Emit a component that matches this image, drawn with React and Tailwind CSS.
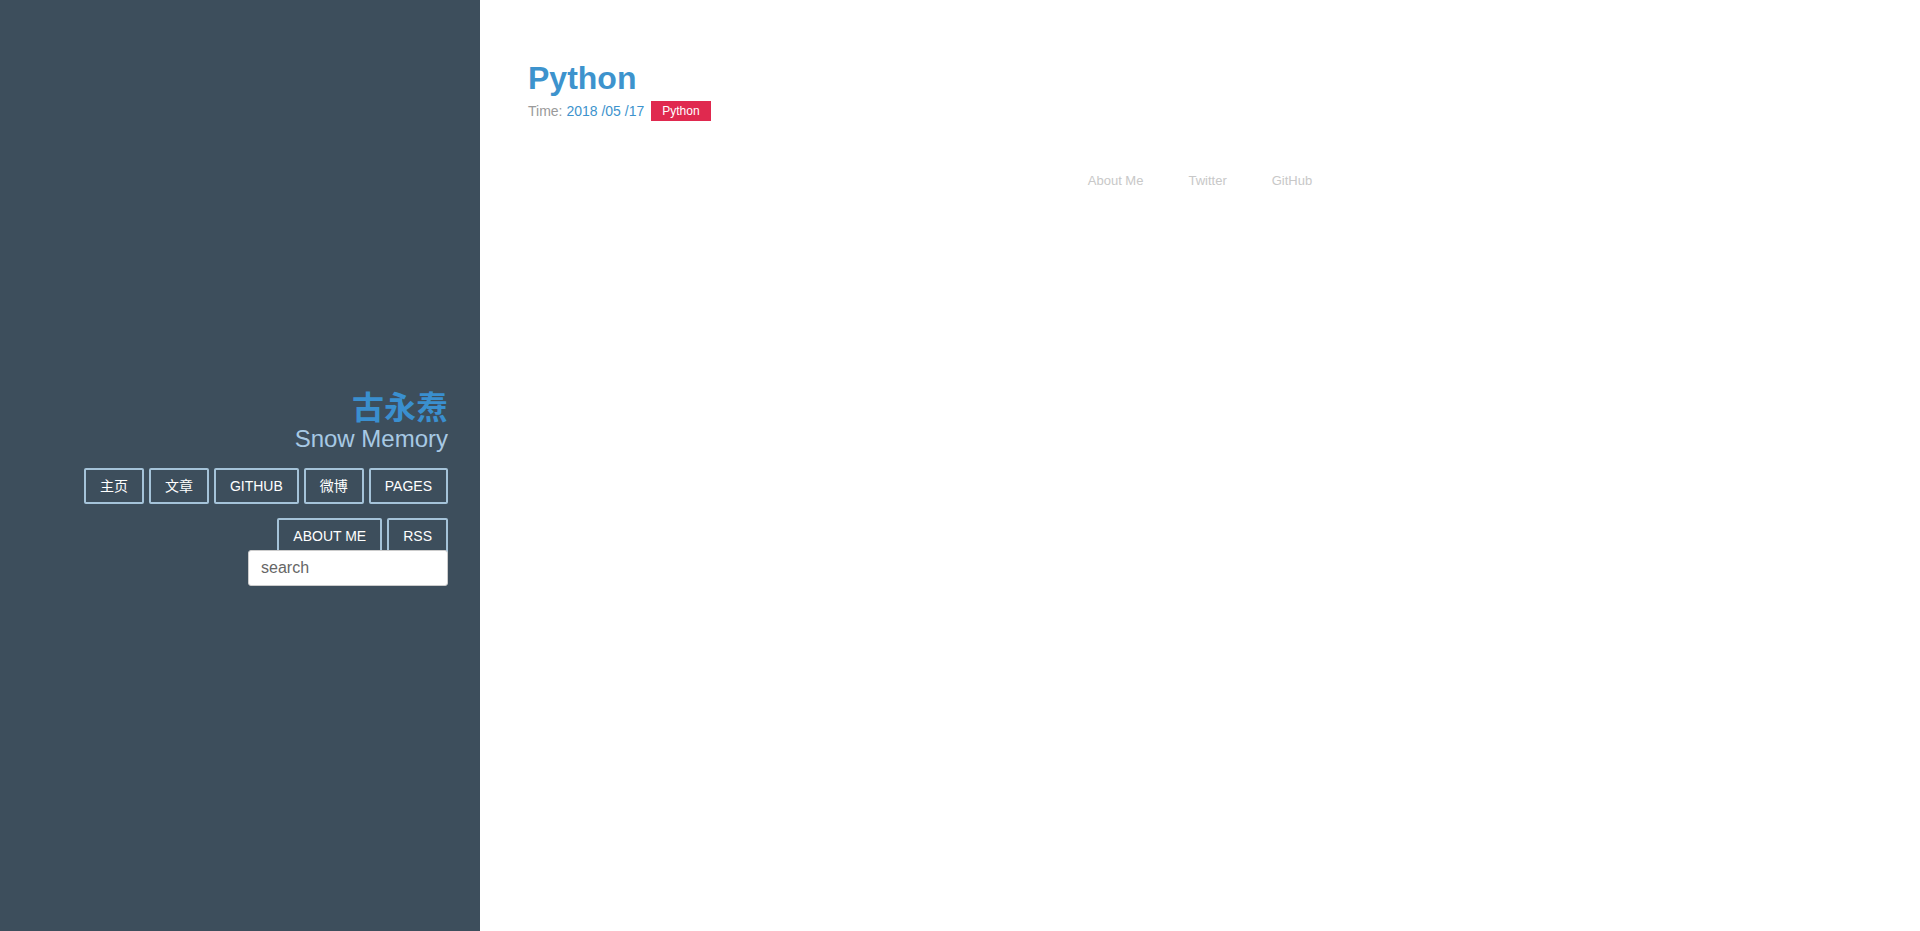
export default function App() {
  const font = { fontFamily: '"Liberation Sans", Arial, "Noto Sans CJK SC", sans-serif' };
  const btn =
    "h-[36px] px-[14px] border-2 border-[#a5c3d9] rounded-[2px] text-white text-[14px] leading-[20px] uppercase flex items-center";
  return (
    <div className="flex w-full h-[931px] bg-white overflow-hidden" style={font}>
      <aside className="w-[480px] shrink-0 h-full bg-[#3d4e5c] flex flex-col items-end pr-[32px] pt-[389px]">
        <div
          className="text-[32px] leading-[32px] font-bold text-[#3a8fcf] mb-[4px]"
          style={{ fontFamily: '"Noto Sans CJK SC", "Liberation Sans", sans-serif' }}
        >
          古永焘
        </div>
        <div className="text-[24px] leading-[28px] text-[#a7c9e4]">Snow Memory</div>
        <div className="mt-[15px] flex justify-end gap-[5px]">
          <a className={btn}>主页</a>
          <a className={btn}>文章</a>
          <a className={btn}>GITHUB</a>
          <a className={btn}>微博</a>
          <a className={btn}>PAGES</a>
        </div>
        <div className="mt-[14px] flex justify-end gap-[5px]">
          <a className={btn}>ABOUT ME</a>
          <a className={btn}>RSS</a>
        </div>
        <input
          className="relative -mt-[4px] w-[200px] h-[36px] bg-white rounded-[3px] border border-[#ccc] pl-[12px] text-[16px] text-[#555] placeholder:text-[#666] outline-none"
          placeholder="search"
        />
      </aside>
      <main className="flex-1 pl-[48px] pt-[58px] flex flex-col">
        <h1 className="text-[32px] leading-[40px] font-bold text-[#3d93cd]">Python</h1>
        <div className="mt-[3px] flex items-center text-[14px] leading-[20px] h-[20px]">
          <span className="text-[#9a9a9a]">Time:&nbsp;</span>
          <span className="text-[#3d93cd]">2018 /05 /17</span>
          <span className="ml-[7px] h-[20px] px-[11px] bg-[#e0294f] text-white text-[12px] leading-[20px]">
            Python
          </span>
        </div>
        <nav className="mt-[51px] -ml-[48px] flex justify-center gap-[45px] text-[13px] leading-[18px] text-[#c8c8c8]">
          <a>About Me</a>
          <a>Twitter</a>
          <a>GitHub</a>
        </nav>
      </main>
    </div>
  );
}
